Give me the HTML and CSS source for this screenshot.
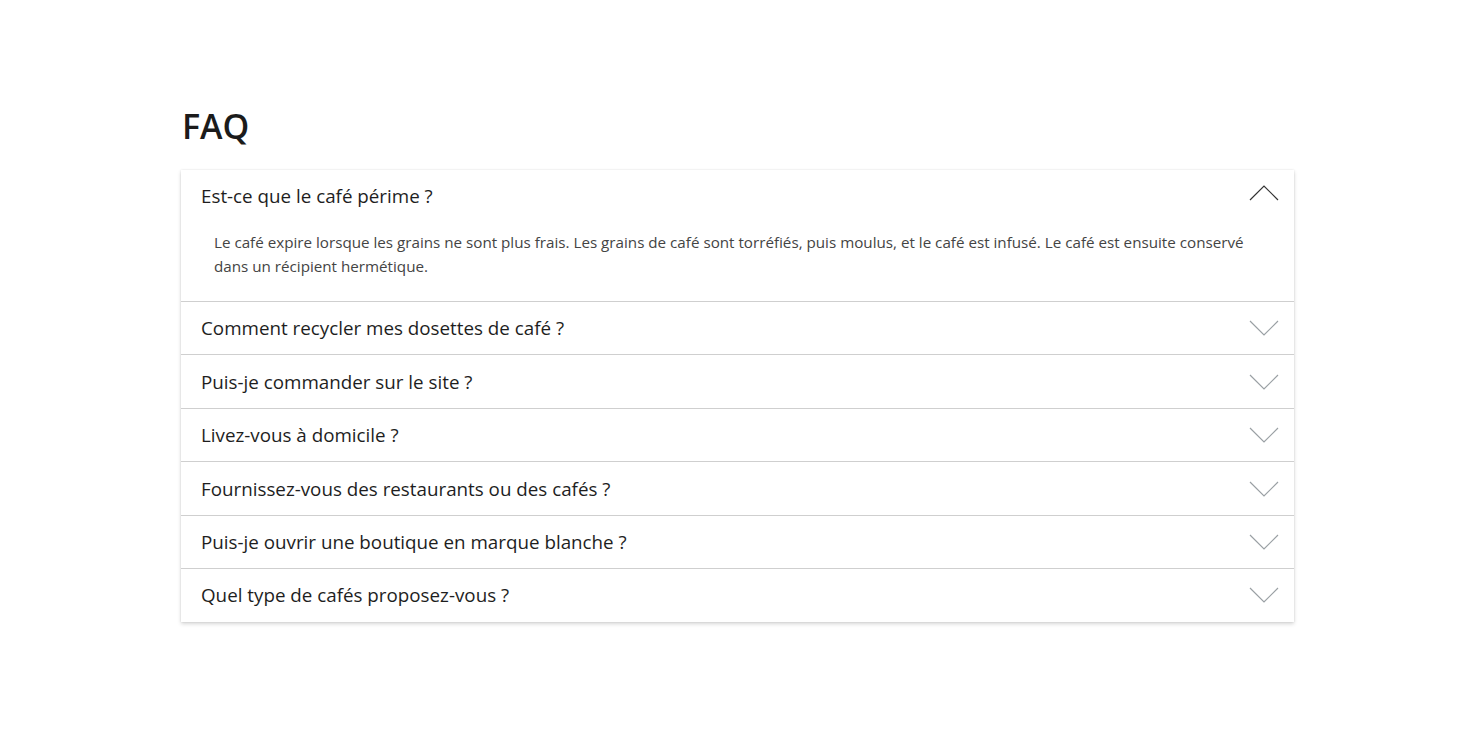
FILE: index.html
```html
<!DOCTYPE html>
<html lang="fr">
<head>
<meta charset="utf-8">
<title>FAQ</title>
<link rel="stylesheet" href="styles.css">
</head>
<body>
<main class="page">
  <h1 class="title">FAQ</h1>
  <div class="accordion">
    <div class="item open">
      <div class="head">
        <span class="q">Est-ce que le café périme ?</span>
        <svg class="chev up" width="30" height="16" viewBox="0 0 30 16"><path d="M1 15 L15 1 L29 15" fill="none" stroke="#333" stroke-width="1.2"/></svg>
      </div>
      <div class="panel">Le café expire lorsque les grains ne sont plus frais. Les grains de café sont torréfiés, puis moulus, et le café est infusé. Le café est ensuite conservé dans un récipient hermétique.</div>
    </div>
    <div class="item">
      <div class="head"><span class="q">Comment recycler mes dosettes de café ?</span>
        <svg class="chev" width="30" height="16" viewBox="0 0 30 16"><path d="M1 1 L15 15 L29 1" fill="none" stroke="#9aa0a4" stroke-width="1.2"/></svg></div>
    </div>
    <div class="item">
      <div class="head"><span class="q">Puis-je commander sur le site ?</span>
        <svg class="chev" width="30" height="16" viewBox="0 0 30 16"><path d="M1 1 L15 15 L29 1" fill="none" stroke="#9aa0a4" stroke-width="1.2"/></svg></div>
    </div>
    <div class="item">
      <div class="head"><span class="q">Livez-vous à domicile ?</span>
        <svg class="chev" width="30" height="16" viewBox="0 0 30 16"><path d="M1 1 L15 15 L29 1" fill="none" stroke="#9aa0a4" stroke-width="1.2"/></svg></div>
    </div>
    <div class="item">
      <div class="head"><span class="q">Fournissez-vous des restaurants ou des cafés ?</span>
        <svg class="chev" width="30" height="16" viewBox="0 0 30 16"><path d="M1 1 L15 15 L29 1" fill="none" stroke="#9aa0a4" stroke-width="1.2"/></svg></div>
    </div>
    <div class="item">
      <div class="head"><span class="q">Puis-je ouvrir une boutique en marque blanche ?</span>
        <svg class="chev" width="30" height="16" viewBox="0 0 30 16"><path d="M1 1 L15 15 L29 1" fill="none" stroke="#9aa0a4" stroke-width="1.2"/></svg></div>
    </div>
    <div class="item">
      <div class="head"><span class="q">Quel type de cafés proposez-vous ?</span>
        <svg class="chev" width="30" height="16" viewBox="0 0 30 16"><path d="M1 1 L15 15 L29 1" fill="none" stroke="#9aa0a4" stroke-width="1.2"/></svg></div>
    </div>
  </div>
</main>
</body>
</html>
```
FILE: styles.css
```css
* { box-sizing: border-box; }
html, body { margin: 0; padding: 0; background: #fff; }
body {
  font-family: "Open Sans", "Noto Sans", sans-serif;
  color: #222;
}
.page {
  width: 1115px;
  margin: 0 auto;
  padding: 101px 0 100px;
}
.title {
  margin: 0 0 19px 1px;
  font-size: 34px;
  font-weight: 600;
  line-height: 50px;
  color: #1b1b1b;
}
.accordion {
  width: 1113px;
  background: #fff;
  box-shadow: 0 2px 4px rgba(0,0,0,0.16), 0 0 2px rgba(0,0,0,0.1);
}
.item + .item { border-top: 1px solid #cfcfcf; }
.head {
  height: 52.45px;
  display: flex;
  align-items: center;
  justify-content: space-between;
  padding: 0 15px 0 20px;
}
.item.open .head { height: 52px; }
.q {
  font-size: 18.8px;
  line-height: 26px;
  color: #1e1e1e;
}
.item.open .chev { margin-top: -6px; }
.chev { display: block; }
.panel {
  padding: 8px 30px 23px 33px;
  font-size: 15.2px;
  line-height: 24px;
  color: #444;
}
```
